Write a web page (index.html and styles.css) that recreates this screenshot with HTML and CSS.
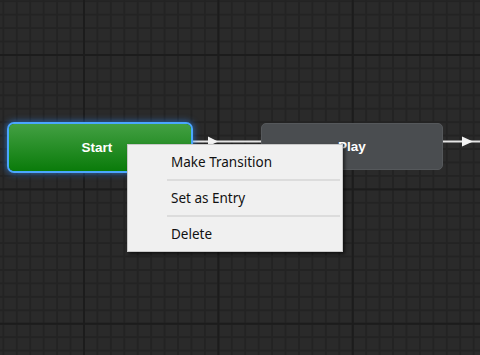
FILE: index.html
```html
<!DOCTYPE html>
<html lang="en">
<head>
    <meta charset="UTF-8">
    <meta name="viewport" content="width=device-width, initial-scale=1.0">
    <title>State Machine</title>
    <link rel="stylesheet" href="styles.css">
</head>
<body>
    <div class="canvas">
        <!-- transitions -->
        <svg class="links" width="480" height="355" viewBox="0 0 480 355">
            <line x1="193" y1="141.5" x2="261" y2="141.5" class="link"/>
            <polygon points="208,136.5 218,141.5 208,146.5" class="link-head"/>
            <line x1="443" y1="141.5" x2="480" y2="141.5" class="link"/>
            <polygon points="462,136.5 473,141.5 462,146.5" class="link-head"/>
        </svg>

        <div class="node node-entry selected" style="left: 9px; top: 124px;">Start</div>
        <div class="node" style="left: 261px; top: 123px;">Play</div>

        <ul class="context-menu" style="left: 127px; top: 144px;">
            <li class="menu-item">Make Transition</li>
            <li class="menu-separator"></li>
            <li class="menu-item">Set as Entry</li>
            <li class="menu-separator"></li>
            <li class="menu-item">Delete</li>
        </ul>
    </div>
</body>
</html>
```

FILE: styles.css
```css
html, body {
    margin: 0;
    padding: 0;
    overflow: hidden;
}

.canvas {
    position: relative;
    width: 480px;
    height: 355px;
    background-color: #2a2a2a;
    background-image:
        linear-gradient(to right, #1c1c1c 0 2px, transparent 2px),
        linear-gradient(to bottom, #1c1c1c 0 2px, transparent 2px),
        linear-gradient(to right, #232323 0 1.5px, transparent 1.5px),
        linear-gradient(to bottom, #232323 0 1.5px, transparent 1.5px);
    background-size: 134.4px 134.4px, 134.4px 134.4px, 13.44px 13.44px, 13.44px 13.44px;
    background-position: 83px 54px;
    font-family: "Liberation Sans", Arial, sans-serif;
}

.links {
    position: absolute;
    left: 0;
    top: 0;
}

.link {
    stroke: #e4e4e4;
    stroke-width: 2;
}

.link-head {
    fill: #f2f2f2;
}

.node {
    position: absolute;
    width: 182px;
    height: 47px;
    box-sizing: border-box;
    display: flex;
    align-items: center;
    justify-content: center;
    border-radius: 5px;
    background: #4a4d50;
    border: 1px solid #55585b;
    color: #fff;
    font-size: 13.5px;
    font-weight: bold;
}

.node-entry {
    background: linear-gradient(to bottom, #43a043, #0a7b0a);
    border: none;
    padding-right: 6px;
}

.node.selected {
    box-shadow: 0 0 0 2px #4aa6ff, 0 0 6px 3px rgba(50, 140, 255, 0.55);
}

.context-menu {
    position: absolute;
    width: 216px;
    box-sizing: border-box;
    margin: 0;
    padding: 0;
    list-style: none;
    background: #f0f0f0;
    border: 1px solid #c8c8c8;
    box-shadow: 2px 2px 3px rgba(0, 0, 0, 0.55);
    font-family: "Noto Sans", "Open Sans", sans-serif;
    font-size: 13.5px;
    color: #111;
}

.menu-item {
    height: 34px;
    line-height: 34px;
    padding-left: 43px;
}

.menu-separator {
    height: 2px;
    margin: 0 2px 0 39px;
    background: #dcdcdc;
}
```
